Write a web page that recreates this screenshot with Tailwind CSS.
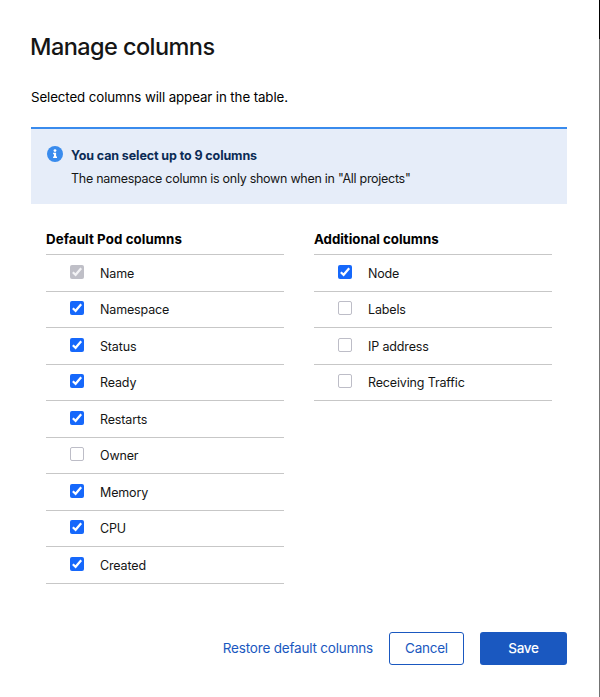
<!DOCTYPE html>
<html lang="en">
<head>
<meta charset="utf-8">
<title>Manage columns</title>
<script src="https://cdn.jsdelivr.net/npm/@tailwindcss/browser@4"></script>
</head>
<body class="flex h-[697px] w-[600px] overflow-hidden bg-white font-['Inter',sans-serif] text-[#151515]">
<main class="flex w-[599px] flex-col pl-[31px] pr-8">
  <h1 class="mt-[31px] -ml-px text-[23.5px] leading-8 font-medium tracking-[-0.56px]">Manage columns</h1>
  <p class="mt-6 text-[13.3px] leading-5 tracking-[-0.1px] text-black">Selected columns will appear in the table.</p>

  <section class="mt-5 flex h-[77px] gap-2 border-t-2 border-[#398bed] bg-[#e6edf9] pt-[17px] pl-4">
    <svg class="size-4" viewBox="0 0 16 16"><circle cx="8" cy="8" r="8" fill="#398bed"/><circle cx="8" cy="4.6" r="1.4" fill="#fff"/><path d="M6.1 6.8H9.1v3.8h.9V12H6.1v-1.4H7V8.2h-.9z" fill="#fff"/></svg>
    <div>
      <h2 class="text-[12.5px] leading-5 font-bold tracking-[-0.1px] text-[#0b2b55]">You can select up to 9 columns</h2>
      <p class="mt-[3px] text-[12.5px] leading-5 tracking-[-0.28px]">The namespace column is only shown when in "All projects"</p>
    </div>
  </section>

  <div class="mt-[25px] flex gap-[30px] pl-[15px]">
    <section class="w-[238px]">
      <h3 class="h-[26px] border-b border-[#c7c7c7] text-[13.3px] leading-[21px] font-bold tracking-[0.09px] text-black">Default Pod columns</h3>
      <ul id="defaults"></ul>
    </section>
    <section class="w-[238px]">
      <h3 class="h-[26px] border-b border-[#c7c7c7] text-[13.3px] leading-[21px] font-bold tracking-[-0.03px] text-black">Additional columns</h3>
      <ul id="additional"></ul>
    </section>
  </div>

  <footer class="mt-12 flex justify-end text-[13.5px] font-medium tracking-[-0.25px] text-[#1a58c0]">
    <button class="mr-4 h-[33px] font-normal tracking-[-0.19px]">Restore default columns</button>
    <button class="mr-4 h-[33px] w-[75px] rounded-[3px] border border-[#1a58c0] font-normal">Cancel</button>
    <button class="h-[33px] w-[87px] rounded-[3px] bg-[#1a58c0] text-white">Save</button>
  </footer>
</main>
<aside class="w-px bg-[#737373]"><div class="h-[39px] bg-black"></div></aside>
<script>
const box = {
  on: 'bg-[#1668fb]',
  locked: 'bg-[#bfbfc7]',
  off: 'border border-[#bdbdc7] bg-white'
};
function fill(id, items) {
  document.getElementById(id).innerHTML = items.map(([name, state], i) => `
    <li class="flex border-b border-[#c7c7c7] pl-6 ${i % 2 ? 'h-[36px] pt-[9px]' : 'h-[37px] pt-[10px]'}">
      <span class="size-[14px] shrink-0 rounded-[2px] ${box[state]}">${state === 'off' ? '' : `<svg class="size-[14px]" viewBox="0 0 14 14" fill="none" stroke="${state === 'locked' ? '#f3f3f5' : '#fff'}" stroke-width="2.2"><path d="M2.8 7.2 5.6 9.8 11.2 3.3"/></svg>`}</span>
      <span class="-mt-px ml-4 text-[12.5px] leading-5 tracking-[-0.15px]">${name}</span>
    </li>`).join('');
}
fill('defaults', [['Name','locked'],['Namespace','on'],['Status','on'],['Ready','on'],['Restarts','on'],['Owner','off'],['Memory','on'],['CPU','on'],['Created','on']]);
fill('additional', [['Node','on'],['Labels','off'],['IP address','off'],['Receiving Traffic','off']]);
</script>
</body>
</html>
